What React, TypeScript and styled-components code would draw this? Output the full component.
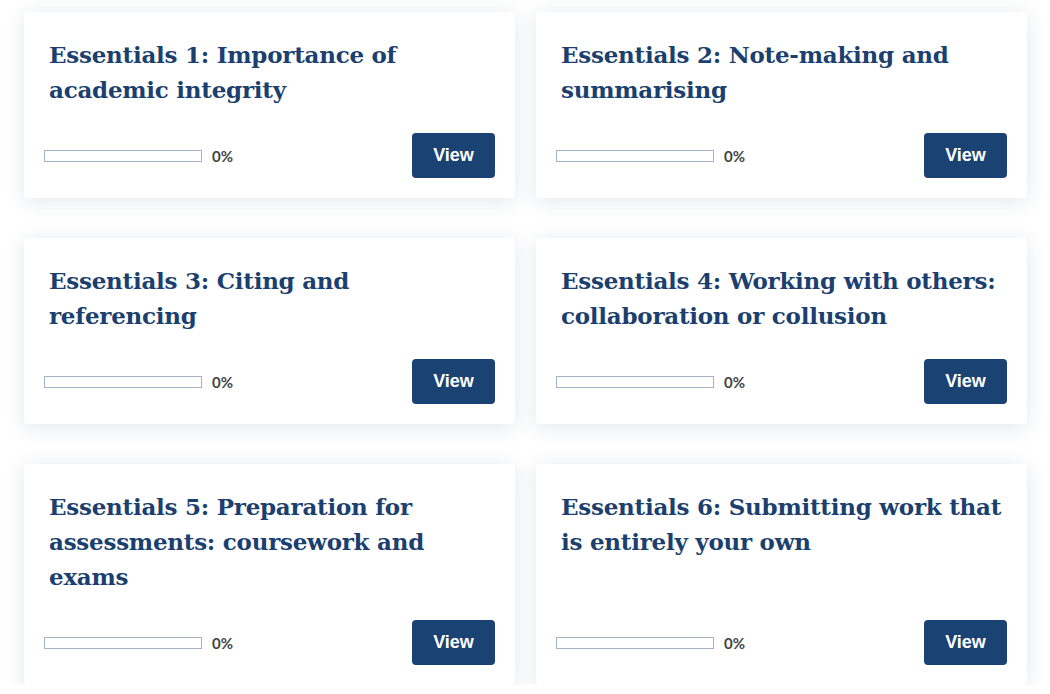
import React from "react"
import styled, { createGlobalStyle } from "styled-components"

const GlobalStyle = createGlobalStyle`
  html, body {
    margin: 0;
    padding: 0;
    background: #ffffff;
  }
`

const modules = [
  { title: "Essentials 1: Importance of academic integrity", progress: 0 },
  { title: "Essentials 2: Note-making and summarising", progress: 0 },
  { title: "Essentials 3: Citing and referencing", progress: 0 },
  { title: "Essentials 4: Working with others: collaboration or collusion", progress: 0 },
  { title: "Essentials 5: Preparation for assessments: coursework and exams", progress: 0 },
  { title: "Essentials 6: Submitting work that is entirely your own", progress: 0 },
]

export default function App() {
  return (
    <>
      <GlobalStyle />
      <Grid>
        {modules.map(m => (
          <Card key={m.title}>
            <Title>{m.title}</Title>
            <Footer>
              <Progress>
                <Bar>
                  <Fill style={{ width: `${m.progress}%` }} />
                </Bar>
                <Percent>{m.progress}%</Percent>
              </Progress>
              <ViewButton>View</ViewButton>
            </Footer>
          </Card>
        ))}
      </Grid>
    </>
  )
}

const Grid = styled.div`
  display: grid;
  grid-template-columns: 491px 491px;
  column-gap: 21px;
  row-gap: 40px;
  padding: 12px 0 0 24px;
`
const Card = styled.div`
  background: #fff;
  border-radius: 4px;
  box-shadow: 0 3px 20px rgba(40, 60, 100, 0.13);
  padding: 20px;
  display: flex;
  flex-direction: column;
  justify-content: space-between;
`
const Title = styled.h2`
  margin: 0 0 0 5px;
  padding-top: 5px;
  font-family: "DejaVu Serif", serif;
  font-weight: 700;
  font-size: 23px;
  letter-spacing: -0.25px;
  line-height: 35px;
  color: #1b3f6e;
`
const Footer = styled.div`
  display: flex;
  justify-content: space-between;
  align-items: center;
  margin-top: 26px;
`
const Progress = styled.div`
  display: flex;
  align-items: center;
  gap: 10px;
`
const Bar = styled.div`
  width: 156px;
  height: 10px;
  border: 1px solid #a3b2c7;
  background: #fff;
`
const Fill = styled.div`
  height: 100%;
  background: #1a4273;
`
const Percent = styled.span`
  font-family: Lato, "Liberation Sans", sans-serif;
  font-size: 15px;
  font-weight: 700;
  color: #444;
`
const ViewButton = styled.button`
  width: 83px;
  height: 45px;
  border: none;
  border-radius: 4px;
  background: #1a4273;
  color: #fff;
  font-family: "Liberation Sans", Arial, sans-serif;
  font-weight: 700;
  font-size: 18px;
  cursor: pointer;
`
